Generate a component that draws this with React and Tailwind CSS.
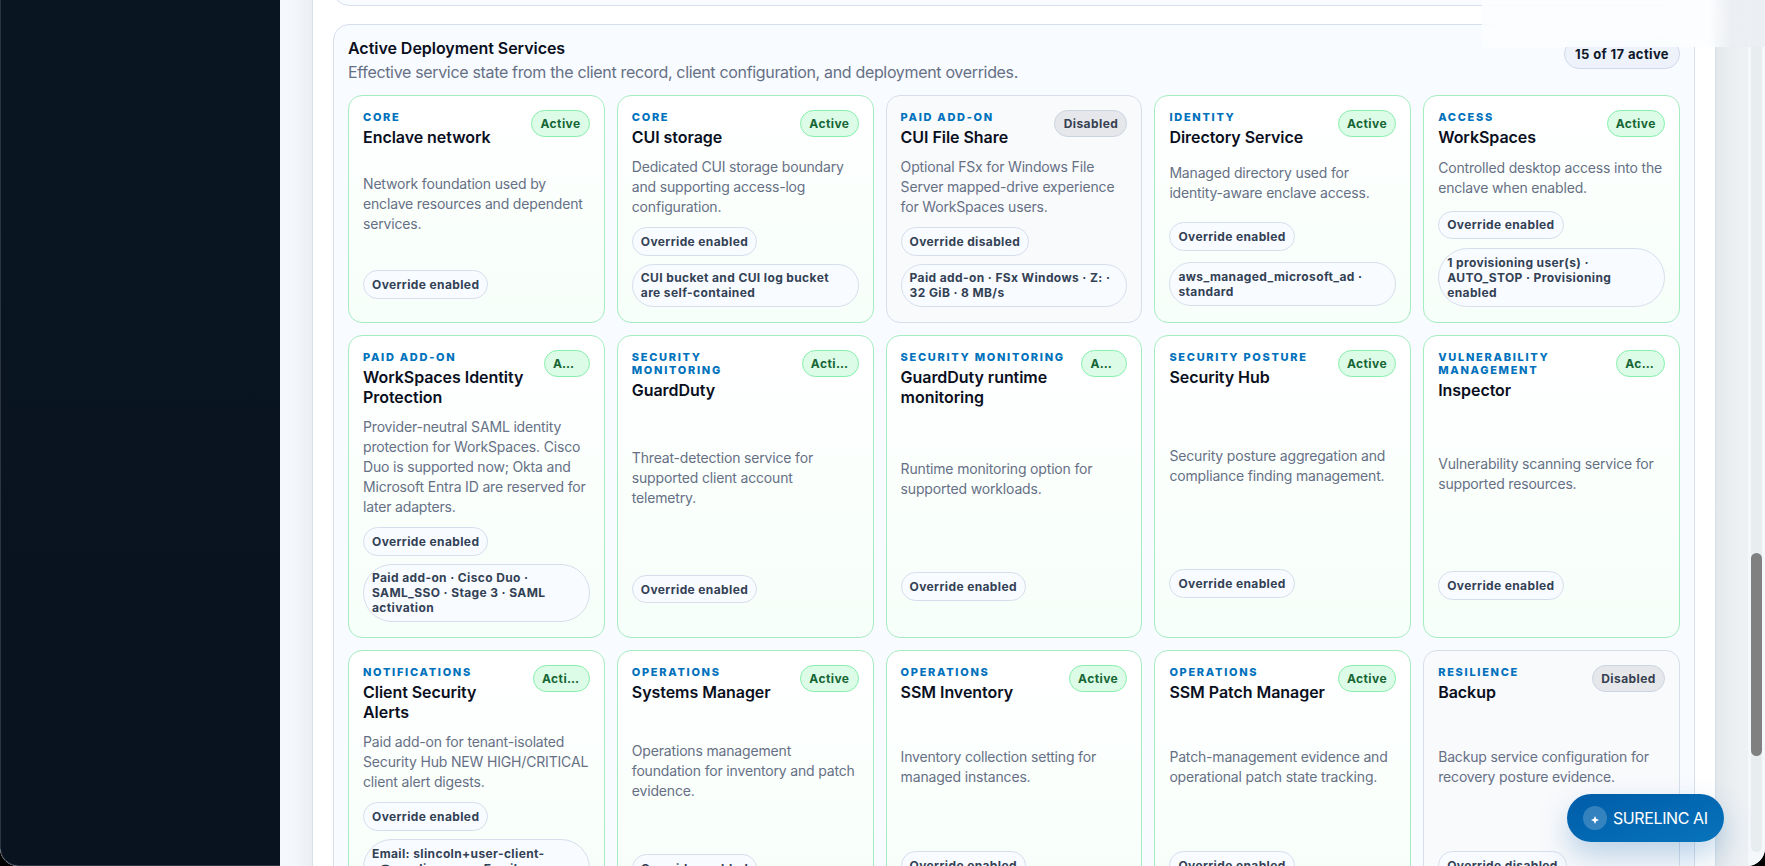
import React from 'react';

const services = [
  { kicker: 'Core', name: 'Enclave network', text: 'Network foundation used by enclave resources and dependent services.' },
  {
    kicker: 'Core',
    name: 'CUI storage',
    text: 'Dedicated CUI storage boundary and supporting access-log configuration.',
    detail: 'CUI bucket and CUI log bucket are self-contained',
  },
  {
    kicker: 'Paid add-on',
    name: 'CUI File Share',
    text: 'Optional FSx for Windows File Server mapped-drive experience for WorkSpaces users.',
    detail: 'Paid add-on · FSx Windows · Z: · 32 GiB · 8 MB/s',
    disabled: true,
  },
  {
    kicker: 'Identity',
    name: 'Directory Service',
    text: 'Managed directory used for identity-aware enclave access.',
    detail: 'aws_managed_microsoft_ad · standard',
  },
  {
    kicker: 'Access',
    name: 'WorkSpaces',
    text: 'Controlled desktop access into the enclave when enabled.',
    detail: '1 provisioning user(s) · AUTO_STOP · Provisioning enabled',
  },
  {
    kicker: 'Paid add-on',
    name: 'WorkSpaces Identity Protection',
    text: 'Provider-neutral SAML identity protection for WorkSpaces. Cisco Duo is supported now; Okta and Microsoft Entra ID are reserved for later adapters.',
    detail: 'Paid add-on · Cisco Duo · SAML_SSO · Stage 3 · SAML activation',
    pillWidth: 'w-[46px]',
  },
  {
    kicker: 'Security monitoring',
    name: 'GuardDuty',
    text: 'Threat-detection service for supported client account telemetry.',
    pillWidth: 'w-[57px]',
  },
  {
    kicker: 'Security monitoring',
    name: 'GuardDuty runtime monitoring',
    text: 'Runtime monitoring option for supported workloads.',
    pillWidth: 'w-[46px]',
  },
  { kicker: 'Security posture', name: 'Security Hub', text: 'Security posture aggregation and compliance finding management.' },
  {
    kicker: 'Vulnerability management',
    name: 'Inspector',
    text: 'Vulnerability scanning service for supported resources.',
    pillWidth: 'w-[49px]',
  },
  {
    kicker: 'Notifications',
    name: 'Client Security Alerts',
    text: 'Paid add-on for tenant-isolated Security Hub NEW HIGH/CRITICAL client alert digests.',
    detail: 'Email: slincoln+user-client-a@surelinc.com · Email · confirmation pending',
    pillWidth: 'w-[57px]',
  },
  { kicker: 'Operations', name: 'Systems Manager', text: 'Operations management foundation for inventory and patch evidence.' },
  { kicker: 'Operations', name: 'SSM Inventory', text: 'Inventory collection setting for managed instances.' },
  { kicker: 'Operations', name: 'SSM Patch Manager', text: 'Patch-management evidence and operational patch state tracking.' },
  { kicker: 'Resilience', name: 'Backup', text: 'Backup service configuration for recovery posture evidence.', disabled: true },
];

function Tag({ children }) {
  return (
    <span className="rounded-[30px] border border-[#d7deeb] bg-[#f8fbff] px-2 py-[5.9px] text-xs leading-[15px] font-bold tracking-[0.38px] text-[#334155]">
      {children}
    </span>
  );
}

function ServiceCard({ service }) {
  const { kicker, name, text, detail, disabled, pillWidth = 'w-auto' } = service;
  const card = disabled ? 'border-[#d8dfeb] bg-[#f9fafc]' : 'border-[#a6ecc1] bg-linear-to-b from-white to-[#f6fff9]';
  const pill = disabled
    ? 'border-[#cbd5e1] bg-[#e5e7eb] text-[#374151]'
    : 'border-[#86efac] bg-[#dcfce7] text-[#166534]';

  return (
    <article className={`grid gap-2.5 rounded-[14px] border px-3.5 py-[14.4px] ${card}`}>
      <div className="flex items-start justify-between gap-2.5">
        <div className="min-w-0 flex-1 pt-[0.6px]">
          <span className="block text-[11px] leading-[13px] font-extrabold tracking-[1.7px] text-[#0071bc] uppercase">
            {kicker}
          </span>
          <h4 className="mt-[3.1px] text-base leading-5 font-semibold tracking-[-0.05px] text-[#0a0f1e]">{name}</h4>
        </div>
        <span
          className={`shrink-0 truncate rounded-full border px-[8.2px] py-[5px] text-xs leading-[15px] font-bold tracking-[0.43px] ${pillWidth} ${pill}`}
        >
          {disabled ? 'Disabled' : 'Active'}
        </span>
      </div>
      <p className="text-sm leading-5 tracking-[-0.17px] text-[#667085]">{text}</p>
      <div className="flex flex-wrap items-center gap-2">
        <Tag>{disabled ? 'Override disabled' : 'Override enabled'}</Tag>
        {detail && <Tag>{detail}</Tag>}
      </div>
    </article>
  );
}

function AssistantButton() {
  return (
    <button className="absolute right-[41px] bottom-6 flex h-12 w-[157px] items-center gap-1.5 rounded-full bg-linear-to-br from-[#005ca9] to-[#0873bb] pl-4 text-white shadow-[0_14px_30px_rgba(0,92,169,0.25)]">
      <span className="flex size-6 items-center justify-center rounded-full bg-white/20">
        <svg viewBox="0 0 10 10" className="mt-[3px] size-2" fill="currentColor">
          <path d="M5 0 L6.5 3.5 L10 5 L6.5 6.5 L5 10 L3.5 6.5 L0 5 L3.5 3.5 Z" />
        </svg>
      </span>
      <span className="text-base tracking-[-0.4px] whitespace-nowrap">SURELINC AI</span>
    </button>
  );
}

export default function App() {
  return (
    <div className="h-[866px] w-[1765px] overflow-hidden bg-black font-['Inter',sans-serif]">
      <div className="relative flex h-full overflow-hidden rounded-b-[18px] bg-[#f4f8fd]">
        <aside className="w-[280px] shrink-0 rounded-bl-[18px] border-b border-l border-[#2b343f] bg-linear-to-b from-[#091622] to-[#09121f]" />

        <main className="flex-1 overflow-hidden bg-linear-to-r from-[#f5f8fd] to-[#edf1f4] px-8">
          <div className="h-[1100px] border-x border-[#d7dfeb] bg-white px-5 shadow-[0_0_28px_rgba(30,60,60,0.09)]">
            <div className="-mt-[34px] h-10 rounded-[16px] border border-[#d7dfec] bg-[#f8fbff]" />

            <section className="mt-[18px] rounded-[16px] border border-[#d7dfec] bg-[#f8fbff] px-3.5 pb-3.5">
              <header className="flex h-[69.7px] items-start justify-between">
                <div className="pt-[11px]">
                  <h3 className="text-base leading-6 font-semibold tracking-[-0.04px] text-[#0a0f1e]">
                    Active Deployment Services
                  </h3>
                  <p className="text-base leading-6 tracking-[-0.33px] text-[#667085]">
                    Effective service state from the client record, client configuration, and deployment overrides.
                  </p>
                </div>
                <span className="mt-3.5 rounded-full border border-[#d0daea] bg-[#eef3fb] px-2.5 py-1.5 text-[13px] leading-4 font-bold tracking-[0.38px] text-[#0f172a]">
                  15 of 17 active
                </span>
              </header>
              <div className="grid grid-cols-5 gap-3">
                {services.map((service) => (
                  <ServiceCard key={service.name} service={service} />
                ))}
              </div>
            </section>
          </div>
        </main>

        <div className="w-[17px] shrink-0 bg-[#f4f8fb] px-[3px] pb-3.5">
          <div className="h-full rounded-b-full bg-[#e8edf0] pt-[553px]">
            <div className="h-[203px] rounded-full bg-[#808080]" />
          </div>
        </div>

        <div className="absolute top-0 right-0 h-[47px] w-[283px] bg-linear-to-r from-[#fbfdff]/90 from-60% via-[#fdfeff]/90 via-80% to-[#eceff3]/90 to-88% backdrop-blur-[20px]" />
        <AssistantButton />
      </div>
    </div>
  );
}
